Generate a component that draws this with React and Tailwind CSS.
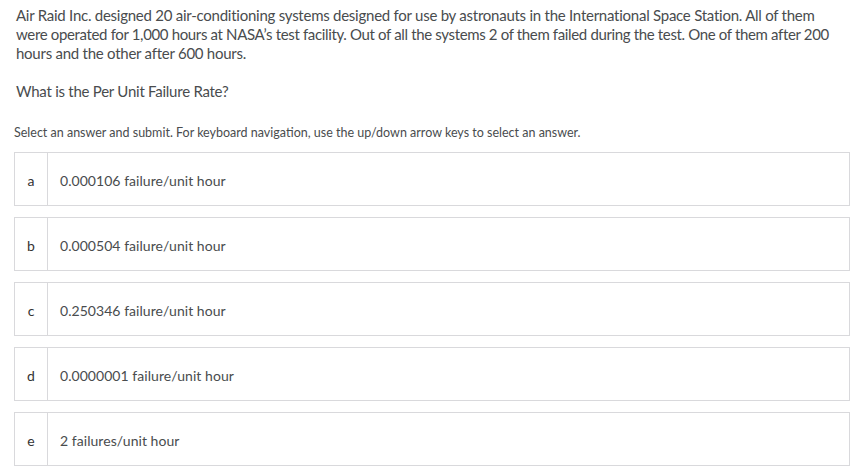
import React from "react";

const options = [
  ["a", "0.000106 failure/unit hour"],
  ["b", "0.000504 failure/unit hour"],
  ["c", "0.250346 failure/unit hour"],
  ["d", "0.0000001 failure/unit hour"],
  ["e", "2 failures/unit hour"],
];

export default function App() {
  return (
    <div className="w-[863px] h-[470px] bg-white text-[#494c4e] overflow-hidden" style={{ fontFamily: "Lato, 'Noto Sans', sans-serif" }}>
      <div className="pl-4 pr-2 pt-[6px] text-[15px] leading-[19px] tracking-[-0.25px] whitespace-nowrap">
        <p>
          Air Raid Inc. designed 20 air-conditioning systems designed for use by astronauts in the International Space Station. All of them
          <br />
          <span className="tracking-[-0.35px]">were operated for 1,000 hours at NASA’s test facility. Out of all the systems 2 of them failed during the test. One of them after 200</span>
          <br />
          hours and the other after 600 hours.
        </p>
        <p className="mt-[19px]">What is the Per Unit Failure Rate?</p>
      </div>
      <p className="pl-[14px] mt-[24px] text-[12.5px] leading-[16px]">
        Select an answer and submit. For keyboard navigation, use the up/down arrow keys to select an answer.
      </p>
      <div className="pl-[14px] w-[850px] mt-[11px] flex flex-col gap-[11px]">
        {options.map(([l, t]) => (
          <div key={l} className="h-[54px] border border-[#d9d9dc] flex items-stretch">
            <div className="w-[33px] border-r border-[#d9d9dc] flex items-center justify-center pt-[2px] text-[14px] text-[#333]">{l}</div>
            <div className="flex items-center pl-[12px] pt-[2px] text-[14px] tracking-[0.05px]">{t}</div>
          </div>
        ))}
      </div>
    </div>
  );
}
